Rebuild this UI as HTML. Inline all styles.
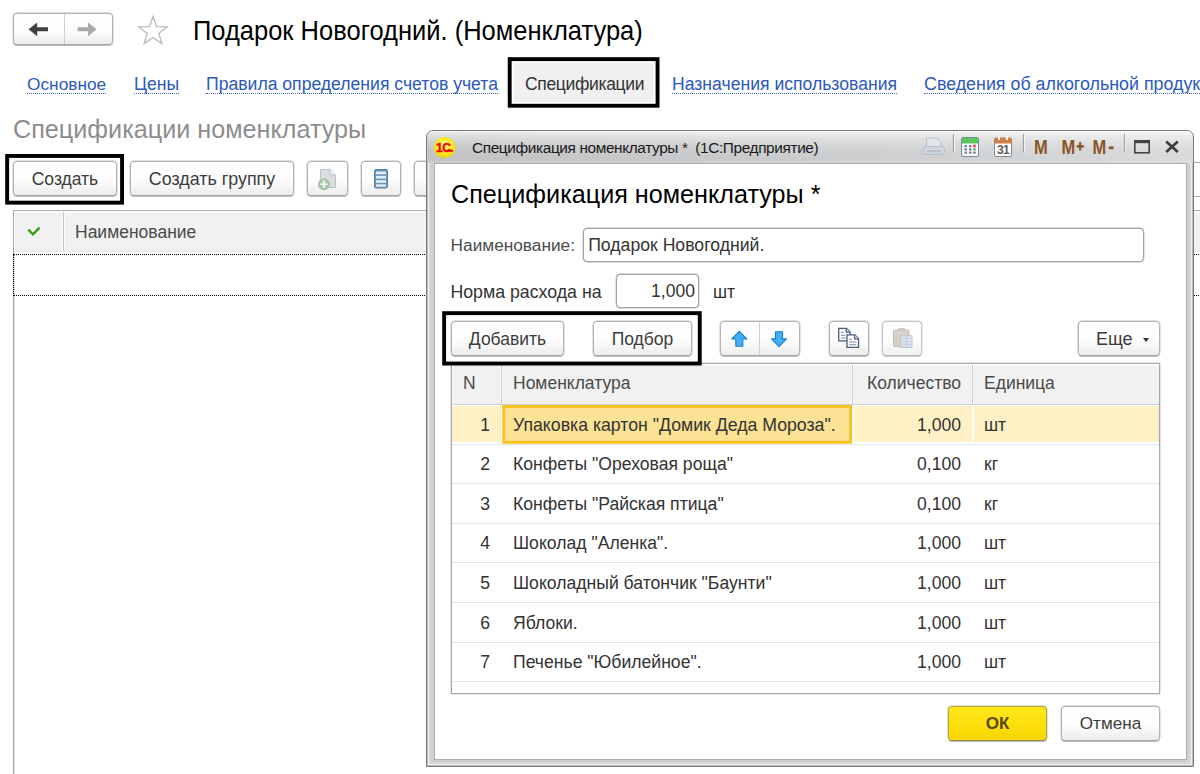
<!DOCTYPE html>
<html lang="ru">
<head>
<meta charset="utf-8">
<title>Спецификация номенклатуры</title>
<style>
*{box-sizing:border-box;margin:0;padding:0}
html,body{width:1200px;height:774px;overflow:hidden;background:#fff}
body{font-family:"Liberation Sans",sans-serif;font-size:17.5px;color:#333;position:relative}
.a{position:absolute;white-space:nowrap}
.btn{position:absolute;border:1px solid #b4b4b4;border-bottom-color:#a6a6a6;border-radius:4px;background:linear-gradient(#ffffff 0%,#fdfdfd 55%,#ececec 100%);box-shadow:0 0 0 .45px #bdbdbd,0 .9px .5px rgba(0,0,0,.26);text-align:center;white-space:nowrap;color:#3c3c3c}
.lnk{position:absolute;white-space:nowrap;color:#2b59be;font-size:17.6px;line-height:20px;border-bottom:1px dotted #3f66c4;height:20px}
.frame{position:absolute;border:3px solid #000;z-index:5;box-shadow:0 0 0 .4px #000,inset 0 0 0 .3px #000}
.th{position:absolute;white-space:nowrap;color:#4a4a4a}
.row{position:absolute;left:452px;width:707px;height:39.6px;border-bottom:1px solid #e4e4e4}
.row span{position:absolute;top:.7px;line-height:39px;white-space:nowrap;color:#333;font-size:17.6px}
.n{left:0;width:38px;text-align:right}
.nm{left:61px}
.q{left:400px;width:109px;text-align:right}
.u{left:532px}
</style>
</head>
<body>

<!-- ===== main window header ===== -->
<div class="btn" id="nav" style="left:13px;top:13px;width:100px;height:32px;"></div>
<div class="a" style="left:64px;top:14px;width:1px;height:30px;background:#cfcfcf"></div>
<svg class="a" style="left:13px;top:13px" width="100" height="32" viewBox="0 0 100 32"><path d="M15.6 16.3 L24.2 9.4 V14.3 H35 V18.3 H24.2 V23.2 Z" fill="#404040"/><path d="M83.6 16.3 L75 9.4 V14.3 H64.6 V18.3 H75 V23.2 Z" fill="#a9a9a9"/></svg>
<svg class="a" id="star" style="left:136px;top:14px" width="34" height="32" viewBox="0 0 34 32"><path d="M17 2.5 L20.6 12.6 L31.3 12.9 L22.8 19.4 L25.9 29.6 L17 23.5 L8.1 29.6 L11.2 19.4 L2.7 12.9 L13.4 12.6 Z" fill="#fff" stroke="#b9b9b9" stroke-width="1.3" stroke-linejoin="miter"/></svg>
<div class="a" id="title" style="left:193px;top:14.7px;transform:scaleY(1.06);transform-origin:0 24.8px;font-size:25.5px;line-height:32px;color:#000">Подарок Новогодний. (Номенклатура)</div>

<!-- tabs -->
<div class="lnk" id="l1" style="left:27px;top:74px;font-size:17.3px">Основное</div>
<div class="lnk" id="l2" style="left:134px;top:74px">Цены</div>
<div class="lnk" id="l3" style="left:206px;top:74px">Правила определения счетов учета</div>
<div class="a" id="tabbg" style="left:514px;top:63.3px;width:139.7px;height:38.6px;background:#f0f0f0"></div>
<div class="a" id="l4" style="left:525px;top:73.6px;line-height:20px;color:#333;font-size:17.5px;letter-spacing:-.34px">Спецификации</div>
<div class="lnk" id="l5" style="left:672px;top:74px">Назначения использования</div>
<div class="lnk" id="l6" style="left:924px;top:74px;width:275.6px;overflow:hidden;font-size:17.85px">Сведения об алкогольной продукции</div>

<div class="a" id="h2" style="left:13px;top:112.8px;transform:scaleY(1.05);transform-origin:0 24.7px;font-size:25.2px;line-height:32px;color:#8d8d8d">Спецификации номенклатуры</div>

<!-- main toolbar -->
<div class="btn" id="b1" style="left:13px;top:161px;width:104px;height:35px;line-height:34px">Создать</div>
<div class="btn" id="b2" style="left:130px;top:161px;width:164px;height:35px;line-height:34px;font-size:17.9px">Создать группу</div>
<div class="btn" id="b3" style="left:307px;top:161px;width:41px;height:35px"></div>
<div class="btn" id="b4" style="left:361px;top:161px;width:40px;height:35px"></div>
<div class="btn" id="b5" style="left:414px;top:161px;width:40px;height:35px"></div>

<svg class="a" id="ic3" style="left:307px;top:161px" width="41" height="35" viewBox="0 0 41 35"><g opacity=".8"><path d="M13.5 8.5 H23 L28.5 14 V26.5 H13.5 Z" fill="#d6d6da" stroke="#aab4c8" stroke-width="1"/><path d="M23 8.5 V14 H28.5" fill="#eef0f4" stroke="#aab4c8" stroke-width="1"/><circle cx="17" cy="23.3" r="6" fill="#8dba92"/><path d="M17 19.6 V27 M13.3 23.3 H20.7" stroke="#e9f3ea" stroke-width="2"/></g></svg>
<svg class="a" id="ic4" style="left:361px;top:161px" width="40" height="35" viewBox="0 0 40 35"><rect x="13.5" y="8.5" width="13" height="18.5" rx="1.5" fill="#6f97b8" stroke="#587f9f"/><g fill="#e4eef6"><rect x="15" y="10.6" width="10" height="2.6"/><rect x="15" y="14.9" width="10" height="2.6"/><rect x="15" y="19.2" width="10" height="2.6"/><rect x="15" y="23.4" width="10" height="2.3"/></g></svg>
<div class="a" id="b6" style="left:1120px;top:162px;width:120px;height:35px;border:1px solid #a6a6a6;border-radius:4px;background:#fff"></div>
<!-- main table -->
<div class="a" id="mtbl" style="left:13px;top:210px;width:1190px;height:570px;border:1px solid #a8a8a8;background:#fff;box-shadow:inset 0 0 0 .5px #c4c4c4"></div>
<div class="a" id="mth" style="left:14px;top:211px;width:1186px;height:41px;background:#f1f1f1;border-bottom:1px solid #e8e8e8;box-shadow:inset 0 1.4px 0 #fff,inset 1px 0 0 #fff"></div>
<div class="a" style="left:63px;top:212px;width:1px;height:39px;background:#c4c4c4;box-shadow:-1px 0 0 #fafafa,1px 0 0 #fafafa"></div>
<div class="th" id="mthn" style="left:75px;top:221.7px;line-height:20px">Наименование</div>
<svg class="a" id="chk" style="left:25px;top:222px" width="18" height="18" viewBox="0 0 18 18"><path d="M3.2 7.6 L8 12.4 L14.5 5.6" fill="none" stroke="#3b9b12" stroke-width="2.3"/></svg>
<div class="a" id="mrow" style="left:13px;top:254px;width:1190px;height:42px;border:1.5px dotted #000"></div>

<!-- ===== dialog ===== -->
<div class="a" id="dlg" style="left:426px;top:130px;width:768px;height:637px;border:1px solid #7a7a7a;border-radius:7px 7px 0 0;background:#ced1d3;box-shadow:inset 0 0 0 1px rgba(150,150,150,.55),inset 0 0 0 2.5px rgba(236,236,236,.9)"></div>
<div class="a" id="dbar" style="left:427px;top:131px;width:766px;height:32px;border-radius:6px 6px 0 0;background:linear-gradient(90deg,rgba(0,0,0,.03),rgba(255,255,255,0) 40%,rgba(255,255,255,.3) 100%),linear-gradient(#fbfbfb 0,#ececec 2px,#dcdddd 8px,#cdcecf 17px,#c8c9cb 28px,#d2d2d2 32px)"></div>
<div class="a" id="dlgin" style="left:433.5px;top:162.5px;width:753px;height:597px;background:#fff;border:1px solid #adadad"></div>
<div class="a" id="dtitle" style="left:472px;top:137.5px;font-size:15.4px;letter-spacing:-.38px;line-height:20px;color:#1a1a1a">Спецификация номенклатуры *&nbsp; (1С:Предприятие)</div>

<!-- 1C logo -->
<svg class="a" id="logo" style="left:433px;top:136px" width="24" height="24" viewBox="0 0 24 24">
<defs><radialGradient id="lg" cx="50%" cy="40%" r="60%"><stop offset="0" stop-color="#fff68a"/><stop offset=".6" stop-color="#ffe926"/><stop offset="1" stop-color="#f3cf00"/></radialGradient></defs>
<circle cx="11.8" cy="11.5" r="10.6" fill="url(#lg)"/>
<text x="3" y="15.7" font-family="Liberation Sans,sans-serif" font-weight="bold" font-size="12" fill="#e8100c" stroke="#e8100c" stroke-width=".5" letter-spacing="-0.4">1С</text>
<rect x="13.4" y="13.7" width="6.8" height="2.1" fill="#e8100c"/>
</svg>
<!-- title bar tools -->
<svg class="a" id="tools" style="left:915px;top:131px" width="280" height="32" viewBox="0 0 280 32" font-family="Liberation Sans,sans-serif">
<!-- printer (disabled) -->
<g opacity=".55"><path d="M11.5 7 H22 L26 11 V17 H11.5 Z" fill="#e9edf2" stroke="#9fb0c4" stroke-width="1"/><rect x="8.5" y="15.5" width="21" height="8" rx="2" fill="#cfd8e3" stroke="#9fb0c4"/><rect x="12" y="19" width="14" height="2.2" fill="#a5b4c6"/></g>
<!-- separators -->
<path d="M38.5 3 V21.5 M108.5 3 V21.5 M209.5 3 V21.5" stroke="#a0a0a0" stroke-width="1.2"/>
<path d="M39.6 3 V21.5 M109.6 3 V21.5 M210.6 3 V21.5" stroke="#f4f4f4" stroke-width="1"/>
<!-- calculator -->
<rect x="46.5" y="6.5" width="17" height="19" rx="1.5" fill="#f4f7fa" stroke="#7b8b99"/>
<rect x="47" y="7" width="16" height="5.5" fill="#58c858"/>
<g fill="#6c7782"><rect x="49.5" y="14.2" width="2.4" height="2"/><rect x="54" y="14.2" width="2.4" height="2"/><rect x="49.5" y="17.4" width="2.4" height="2"/><rect x="54" y="17.4" width="2.4" height="2"/><rect x="58.3" y="17.4" width="2.4" height="2" fill="#3aa06a"/><rect x="49.5" y="20.6" width="2.4" height="2"/><rect x="54" y="20.6" width="2.4" height="2"/><rect x="58.3" y="20.6" width="2.4" height="2"/></g>
<rect x="58.3" y="13.6" width="2.4" height="2.8" fill="#ee3b4b"/>
<!-- calendar -->
<rect x="79.5" y="7.5" width="17" height="18" rx="1.5" fill="#fff" stroke="#7f8c98"/>
<path d="M79 12.5 V9 Q79 6.5 81.5 6.5 H94.5 Q97 6.5 97 9 V12.5 Z" fill="#cc8048"/>
<rect x="83" y="5" width="2" height="4" fill="#fff"/><rect x="91" y="5" width="2" height="4" fill="#fff"/>
<text x="82" y="23.2" font-size="12" font-weight="bold" fill="#5c5c5c" letter-spacing="-0.6">31</text>
<!-- M buttons -->
<g font-weight="bold" font-size="16.5" fill="#8a5526" transform="translate(0,23) scale(1,1.2) translate(0,-23)"><text x="119" y="23">M</text><text x="146.6" y="23">M<tspan font-size="12.5" dx="1.2" dy="-2.4" stroke="#8a5526" stroke-width=".7">+</tspan></text><text x="177.6" y="23">M<tspan font-size="16" dx="2.2" dy="-1.1" stroke="#8a5526" stroke-width=".6">-</tspan></text></g>
<!-- maximize -->
<rect x="219.8" y="10.6" width="14.4" height="11.2" fill="none" stroke="#444" stroke-width="1.6"/><rect x="219" y="9" width="16" height="3.2" fill="#444"/>
<!-- close -->
<path d="M251.2 10.4 L262.8 21 M262.8 10.4 L251.2 21" stroke="#3e3e3e" stroke-width="2.7"/>
</svg>

<div class="a" id="dh" style="left:451px;top:178.1px;transform:scaleY(1.06);transform-origin:0 24.7px;font-size:25.2px;line-height:32px;color:#000">Спецификация номенклатуры *</div>

<div class="a" id="lb1" style="left:450.6px;top:235.4px;line-height:20px;color:#4c4c4c;font-size:17.25px">Наименование:</div>
<div class="a" id="in1" style="left:583px;top:228px;width:561px;height:34px;border:1px solid #a2a2a2;box-shadow:0 0 0 .4px #b4b4b4;border-radius:4px;background:#fff;line-height:33px;padding-left:4.2px;color:#333;font-size:17.65px">Подарок Новогодний.</div>

<div class="a" id="lb2" style="left:450.4px;top:282px;line-height:20px;color:#333;font-size:17.75px">Норма расхода на</div>
<div class="a" id="in2" style="left:616px;top:274px;width:82.5px;height:34px;border:1px solid #a2a2a2;box-shadow:0 0 0 .4px #b4b4b4;border-radius:4px;background:#fff;line-height:33px;padding-right:2.6px;text-align:right;color:#333">1,000</div>
<div class="a" id="lb3" style="left:713px;top:282px;line-height:20px;color:#333">шт</div>

<!-- dialog toolbar -->
<div class="btn" id="d1" style="left:451px;top:321px;width:113px;height:35px;line-height:34px">Добавить</div>
<div class="btn" id="d2" style="left:593px;top:321px;width:99px;height:35px;line-height:34px">Подбор</div>
<div class="btn" id="d3" style="left:720px;top:321px;width:80px;height:35px"></div>
<div class="a" style="left:759px;top:322px;width:1px;height:33px;background:#cfcfcf"></div>
<div class="btn" id="d4" style="left:829px;top:321px;width:40px;height:35px"></div>
<div class="btn" id="d5" style="left:882px;top:321px;width:40px;height:35px;opacity:.75"></div>
<div class="btn" id="d6" style="left:1078px;top:321px;width:82px;height:35px;line-height:34px;text-align:left;padding-left:17px;font-size:18px">Еще</div>
<div class="a" style="left:1143.4px;top:338.3px;width:0;height:0;border:3.8px solid transparent;border-top:4.7px solid #333"></div>

<svg class="a" id="icarr" style="left:720px;top:322px" width="80" height="34" viewBox="0 0 80 34"><path d="M19.3 9.3 L26.8 17 H22.8 V24.2 H15.8 V17 H11.8 Z" fill="#43adf6" stroke="#1c7fc6" stroke-width="1.1" stroke-linejoin="round"/><path d="M59 24.6 L66.5 16.9 H62.5 V9.7 H55.5 V16.9 H51.5 Z" fill="#43adf6" stroke="#1c7fc6" stroke-width="1.1" stroke-linejoin="round"/></svg>
<svg class="a" id="iccopy" style="left:829px;top:322px" width="40" height="34" viewBox="0 0 40 34"><g fill="#fff" stroke="#4d5c7c" stroke-width="1.3"><path d="M9.7 6.3 H17.5 L21.2 10 V18.8 H9.7 Z"/><path d="M17.3 6.5 V10.2 H21"/><path d="M18 12.9 H25.8 L29.5 16.6 V25.4 H18 Z"/><path d="M25.6 13.1 V16.8 H29.3"/></g><path d="M11.8 10.5 H14.5 M11.8 13.3 H16.5 M11.8 16 H16.5 M20.2 17.2 H23 M20.2 20 H27.3 M20.2 22.7 H27.3" stroke="#7d8aa5" stroke-width="1.1"/></svg>
<svg class="a" id="icpaste" style="left:882px;top:322px" width="40" height="34" viewBox="0 0 40 34"><g opacity=".7"><rect x="11.5" y="8" width="15.5" height="16.5" rx="1.2" fill="#c9beb3" stroke="#a99e94"/><rect x="15.5" y="6" width="7.5" height="3.6" rx="1.2" fill="#b9b2ab"/><rect x="19" y="13.8" width="11" height="11.6" fill="#cfdbe7" stroke="#9fb2c6"/><path d="M21 16.8 H28 M21 19.6 H28 M21 22.4 H28 M24.5 15 V24.5" stroke="#a8b9cb" stroke-width=".9"/></g></svg>
<!-- dialog table -->
<div class="a" id="dtbl" style="left:451px;top:363px;width:709px;height:331px;border:1px solid #a8a8a8;background:#fff;box-shadow:0 0 0 .4px #c0c0c0"></div>
<div class="a" id="dth" style="left:452px;top:364px;width:707px;height:41px;background:#f1f1f1;border-bottom:1px solid #cfcfd4;box-shadow:inset 0 1.4px 0 #fff,inset 1px 0 0 #fff"></div>
<div class="a" style="left:501px;top:365px;width:1px;height:39px;background:#c8c8c8;box-shadow:-1px 0 0 #fafafa,1px 0 0 #fafafa"></div>
<div class="a" style="left:852px;top:365px;width:1px;height:39px;background:#c8c8c8;box-shadow:-1px 0 0 #fafafa,1px 0 0 #fafafa"></div>
<div class="a" style="left:972px;top:365px;width:1px;height:39px;background:#c8c8c8;box-shadow:-1px 0 0 #fafafa,1px 0 0 #fafafa"></div>
<div class="th" style="left:463px;top:373px;line-height:20px">N</div>
<div class="th" style="left:513px;top:373px;line-height:20px">Номенклатура</div>
<div class="th" id="thq" style="left:867px;top:373px;line-height:20px">Количество</div>
<div class="th" style="left:984px;top:373px;line-height:20px">Единица</div>

<div class="a" style="left:452px;top:406px;width:49.2px;height:36.3px;background:#fff0c6"></div>
<div class="a" style="left:853.6px;top:406px;width:118.4px;height:36.3px;background:#fff0c6"></div>
<div class="a" style="left:973.6px;top:406px;width:185.4px;height:36.3px;background:#fff0c6"></div>
<svg class="a" id="sel" style="left:500px;top:403px" width="356" height="44" viewBox="0 0 356 44"><rect x="3.7" y="3.4" width="346.9" height="35.9" fill="#fbe294" stroke="#f8c31d" stroke-width="2.8"/></svg>
<div class="row" style="top:405px"><span class="n">1</span><span class="nm" style="font-size:17.7px">Упаковка картон "Домик Деда Мороза".</span><span class="q">1,000</span><span class="u">шт</span></div>
<div class="row" style="top:444.6px"><span class="n">2</span><span class="nm">Конфеты "Ореховая роща"</span><span class="q">0,100</span><span class="u">кг</span></div>
<div class="row" style="top:484.2px"><span class="n">3</span><span class="nm">Конфеты "Райская птица"</span><span class="q">0,100</span><span class="u">кг</span></div>
<div class="row" style="top:523.8px"><span class="n">4</span><span class="nm">Шоколад "Аленка".</span><span class="q">1,000</span><span class="u">шт</span></div>
<div class="row" style="top:563.4px"><span class="n">5</span><span class="nm">Шоколадный батончик "Баунти"</span><span class="q">1,000</span><span class="u">шт</span></div>
<div class="row" style="top:603px"><span class="n">6</span><span class="nm">Яблоки.</span><span class="q">1,000</span><span class="u">шт</span></div>
<div class="row" style="top:642.6px"><span class="n">7</span><span class="nm">Печенье "Юбилейное".</span><span class="q">1,000</span><span class="u">шт</span></div>

<svg class="a" id="frames" style="left:0;top:0;z-index:5;pointer-events:none" width="1200" height="774" viewBox="0 0 1200 774"><g fill="none" stroke="#000" stroke-width="3.9"><rect x="509.70" y="59.15" width="147.85" height="46.60"/><rect x="7.15" y="155.95" width="114.90" height="46.70"/><rect x="444.15" y="313.15" width="255.60" height="50.40"/></g></svg>
<!-- dialog footer -->
<div class="btn" id="ok" style="left:948px;top:706px;width:99px;height:35px;line-height:34px;background:linear-gradient(#ffe81a,#f8d600);border-color:#bba53a;border-bottom-color:#9a8c4a;font-weight:bold;font-size:17px;color:#574a0c">ОК</div>
<div class="btn" id="cancel" style="left:1061px;top:706px;width:99px;height:35px;line-height:34px;font-size:17.1px">Отмена</div>

</body>
</html>
